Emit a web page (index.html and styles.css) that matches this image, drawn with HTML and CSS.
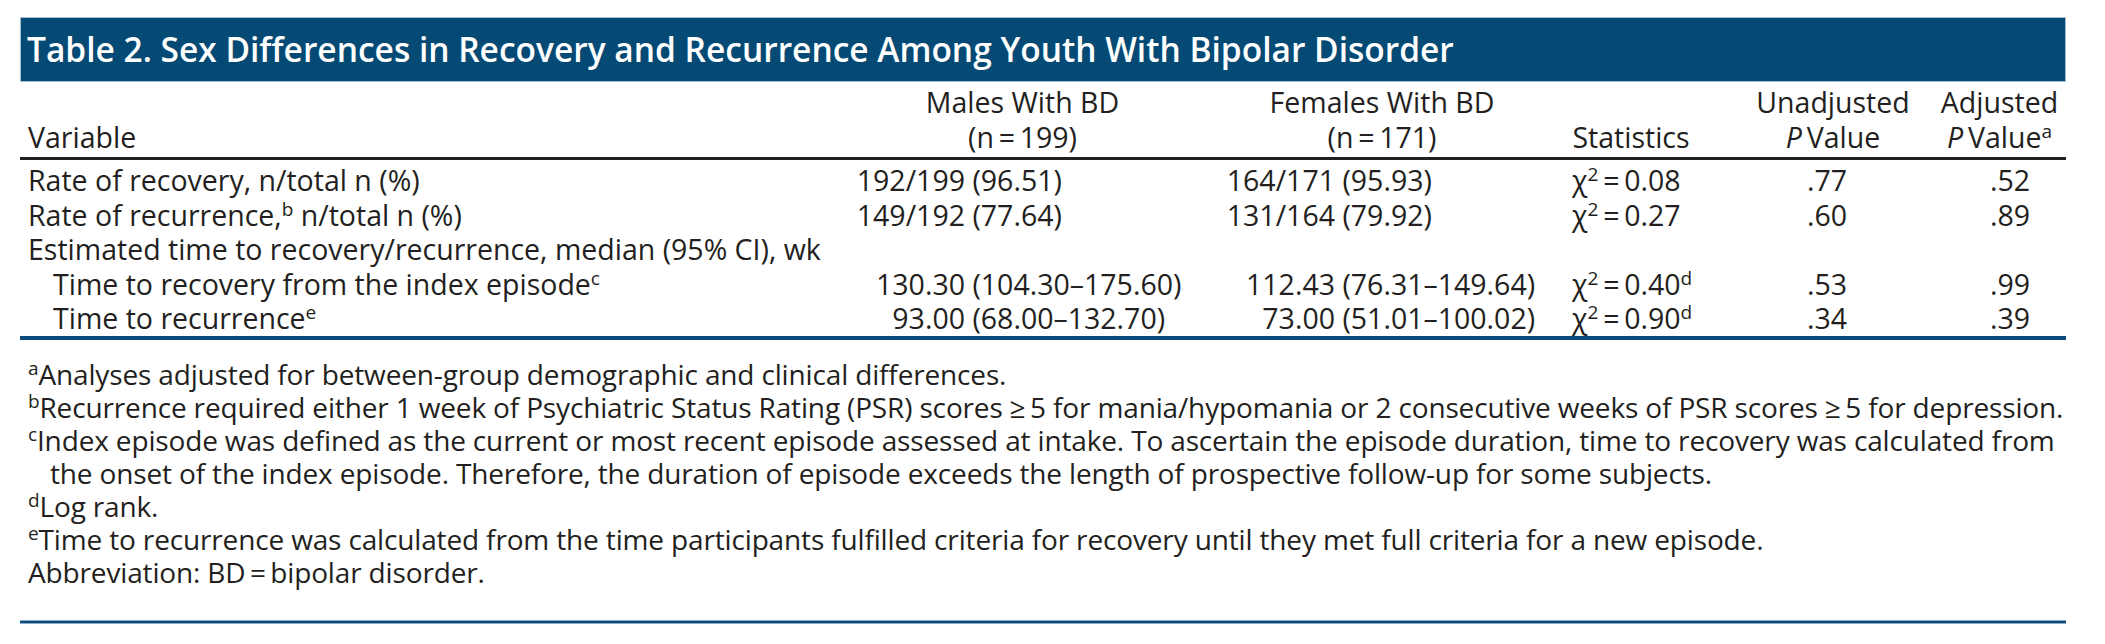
FILE: index.html
```html
<!DOCTYPE html>
<html lang="en">
<head>
<meta charset="utf-8">
<title>Table 2</title>
<link rel="stylesheet" href="styles.css">
</head>
<body>
<div class="page">
  <div class="title">Table 2. Sex Differences in Recovery and Recurrence Among Youth With Bipolar Disorder</div>
  <table class="tbl">
    <colgroup>
      <col class="w-var"><col class="w-m"><col class="w-f"><col class="w-s"><col class="w-u"><col class="w-a">
    </colgroup>
    <thead>
      <tr>
        <th class="h-var">Variable</th>
        <th class="h-m">Males With BD<br>(n&#8201;=&#8201;199)</th>
        <th class="h-f">Females With BD<br>(n&#8201;=&#8201;171)</th>
        <th class="h-s">Statistics</th>
        <th class="h-u">Unadjusted<br><i>P</i>&#8201;Value</th>
        <th class="h-a">Adjusted<br><i>P</i>&#8201;Value<sup>a</sup></th>
      </tr>
    </thead>
    <tbody>
      <tr class="first">
        <td class="var">Rate of recovery, n/total n (%)</td>
        <td class="m"><span class="num">192/199</span> (96.51)</td>
        <td class="f"><span class="num">164/171</span> (95.93)</td>
        <td class="s">χ<sup>2</sup>&#8201;=&#8201;0.08</td>
        <td class="u">.77</td>
        <td class="a">.52</td>
      </tr>
      <tr>
        <td class="var">Rate of recurrence,<sup>b</sup> n/total n (%)</td>
        <td class="m"><span class="num">149/192</span> (77.64)</td>
        <td class="f"><span class="num">131/164</span> (79.92)</td>
        <td class="s">χ<sup>2</sup>&#8201;=&#8201;0.27</td>
        <td class="u">.60</td>
        <td class="a">.89</td>
      </tr>
      <tr>
        <td class="var" colspan="6">Estimated time to recovery/recurrence, median (95% CI), wk</td>
      </tr>
      <tr>
        <td class="var sub">Time to recovery from the index episode<sup>c</sup></td>
        <td class="m"><span class="num">130.30</span> (104.30–175.60)</td>
        <td class="f"><span class="num">112.43</span> (76.31–149.64)</td>
        <td class="s">χ<sup>2</sup>&#8201;=&#8201;0.40<sup>d</sup></td>
        <td class="u">.53</td>
        <td class="a">.99</td>
      </tr>
      <tr>
        <td class="var sub">Time to recurrence<sup>e</sup></td>
        <td class="m"><span class="num">93.00</span> (68.00–132.70)</td>
        <td class="f"><span class="num">73.00</span> (51.01–100.02)</td>
        <td class="s">χ<sup>2</sup>&#8201;=&#8201;0.90<sup>d</sup></td>
        <td class="u">.34</td>
        <td class="a">.39</td>
      </tr>
    </tbody>
  </table>
  <div class="notes">
    <p class="fn"><sup>a</sup>Analyses adjusted for between-group demographic and clinical differences.</p>
    <p class="fn"><sup>b</sup>Recurrence required either 1 week of Psychiatric Status Rating (PSR) scores ≥&#8201;5 for mania/hypomania or 2 consecutive weeks of PSR scores ≥&#8201;5 for depression.</p>
    <p class="fn hang"><sup>c</sup>Index episode was defined as the current or most recent episode assessed at intake. To ascertain the episode duration, time to recovery was calculated from<br>the onset of the index episode. Therefore, the duration of episode exceeds the length of prospective follow-up for some subjects.</p>
    <p class="fn"><sup>d</sup>Log rank.</p>
    <p class="fn"><sup>e</sup>Time to recurrence was calculated from the time participants fulfilled criteria for recovery until they met full criteria for a new episode.</p>
    <p class="fn">Abbreviation: BD&#8201;=&#8201;bipolar disorder.</p>
  </div>
  <div class="endrule"></div>
</div>
</body>
</html>
```

FILE: styles.css
```css
html, body {
  margin: 0;
  padding: 0;
  background: #ffffff;
}

body {
  font-family: "Open Sans", "Noto Sans", sans-serif;
  color: #231f20;
}

.page {
  width: 2046px;
  margin-left: 20px;
  padding-top: 17px;
}

.title {
  box-sizing: border-box;
  height: 65px;
  background: #044a75;
  border: 1px solid #a8bdd0;
  color: #ffffff;
  font-size: 33.5px;
  font-weight: 600;
  line-height: 62px;
  padding-left: 6px;
  white-space: nowrap;
}

.tbl {
  width: 2046px;
  border-collapse: separate;
  border-spacing: 0;
  table-layout: fixed;
  font-size: 28.5px;
  border-bottom: 4px solid #0d4b7a;
}

.w-var { width: 834px; }
.w-m { width: 337px; }
.w-f { width: 348px; }
.w-s { width: 194px; }
.w-u { width: 200px; }
.w-a { width: 133px; }

.tbl th {
  font-weight: 400;
  line-height: 35px;
  vertical-align: bottom;
  padding: 3px 0 2px 0;
  border-bottom: 3px solid #231f20;
  text-align: center;
  white-space: nowrap;
}

.tbl th.h-var { text-align: left; padding-left: 8px; }
.tbl th.h-f { padding-left: 34px; }
.tbl th.h-s { padding-right: 10px; }

.tbl td {
  line-height: 34.5px;
  padding: 0;
  white-space: nowrap;
  vertical-align: top;
}

.tbl tr.first td { padding-top: 3px; }

.tbl td.var { padding-left: 8px; }
.tbl td.sub { padding-left: 33px; }

.num {
  display: inline-block;
  text-align: right;
}

.tbl td.m .num { width: 111px; }
.tbl td.f .num { width: 144px; }

.tbl td.s { padding-left: 33px; }
.tbl td.u { padding-left: 74px; }
.tbl td.a { padding-left: 57px; }

sup {
  font-size: 19px;
  line-height: 0;
  vertical-align: 10px;
}

.notes {
  padding-left: 8px;
  margin-top: 18px;
}

.fn {
  margin: 0;
  font-size: 28px;
  letter-spacing: -0.15px;
  line-height: 33.1px;
  white-space: nowrap;
}

.fn.hang {
  padding-left: 22px;
  text-indent: -22px;
}

.endrule {
  height: 2px;
  background: #0d4b7a;
  border-top: 1px solid #8eaac6;
  border-bottom: 1px solid #8eaac6;
  margin-top: 31px;
}
```
